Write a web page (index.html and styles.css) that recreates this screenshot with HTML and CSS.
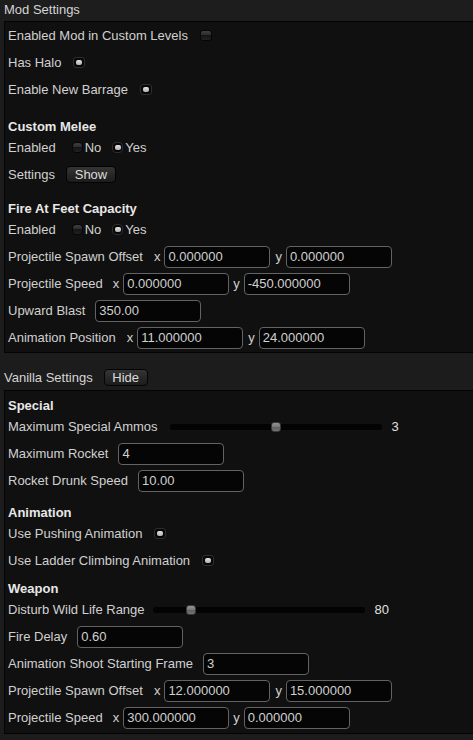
FILE: index.html
```html
<!DOCTYPE html>
<html>
<head>
<meta charset="utf-8">
<link rel="stylesheet" href="styles.css">
</head>
<body>
<div class="title">Mod Settings</div>
<div class="box box-mod">
  <div class="row"><span class="lbl">Enabled Mod in Custom Levels</span><i class="tog"></i></div>
  <div class="row"><span class="lbl">Has Halo</span><i class="tog on"></i></div>
  <div class="row"><span class="lbl">Enable New Barrage</span><i class="tog on"></i></div>

  <div class="head sp15">Custom Melee</div>
  <div class="row"><span class="lbl">Enabled</span><span class="opt first"><i class="radio"></i>No</span><span class="opt"><i class="radio on"></i>Yes</span></div>
  <div class="row"><span class="lbl">Settings</span><span class="btn btn-show">Show</span></div>

  <div class="head sp12">Fire At Feet Capacity</div>
  <div class="row"><span class="lbl">Enabled</span><span class="opt first"><i class="radio"></i>No</span><span class="opt"><i class="radio on"></i>Yes</span></div>
  <div class="row"><span class="lbl">Projectile Spawn Offset</span><span class="ax ax-x">x</span><span class="field">0.000000</span><span class="ax ax-y">y</span><span class="field">0.000000</span></div>
  <div class="row"><span class="lbl">Projectile Speed</span><span class="ax ax-x ax-tight">x</span><span class="field">0.000000</span><span class="ax ax-y ax-tight">y</span><span class="field">-450.000000</span></div>
  <div class="row"><span class="lbl">Upward Blast</span><span class="field solo">350.00</span></div>
  <div class="row"><span class="lbl">Animation Position</span><span class="ax ax-x">x</span><span class="field">11.000000</span><span class="ax ax-y">y</span><span class="field">24.000000</span></div>
</div>

<div class="subtitle"><span>Vanilla Settings</span><span class="btn btn-hide">Hide</span></div>
<div class="box box-van">
  <div class="head">Special</div>
  <div class="row"><span class="lbl">Maximum Special Ammos</span><span class="slider s12"><i class="thumb" style="left:101px"></i></span><span class="val">3</span></div>
  <div class="row"><span class="lbl">Maximum Rocket</span><span class="field solo">4</span></div>
  <div class="row"><span class="lbl">Rocket Drunk Speed</span><span class="field solo">10.00</span></div>

  <div class="head sp10">Animation</div>
  <div class="row"><span class="lbl">Use Pushing Animation</span><i class="tog on"></i></div>
  <div class="row"><span class="lbl">Use Ladder Climbing Animation</span><i class="tog on"></i></div>

  <div class="head sp6">Weapon</div>
  <div class="row"><span class="lbl">Disturb Wild Life Range</span><span class="slider s8"><i class="thumb" style="left:33px"></i></span><span class="val">80</span></div>
  <div class="row"><span class="lbl">Fire Delay</span><span class="field solo">0.60</span></div>
  <div class="row"><span class="lbl">Animation Shoot Starting Frame</span><span class="field solo">3</span></div>
  <div class="row"><span class="lbl">Projectile Spawn Offset</span><span class="ax ax-x">x</span><span class="field">12.000000</span><span class="ax ax-y">y</span><span class="field">15.000000</span></div>
  <div class="row"><span class="lbl">Projectile Speed</span><span class="ax ax-x ax-tight">x</span><span class="field">300.000000</span><span class="ax ax-y ax-tight">y</span><span class="field">0.000000</span></div>
</div>
</body>
</html>
```

FILE: styles.css
```css
html, body {
  margin: 0;
  padding: 0;
}
body {
  width: 473px;
  height: 740px;
  overflow: hidden;
  background: #1c1c1c;
  font-family: "Liberation Sans", Arial, sans-serif;
  font-size: 13px;
  color: #d0d0d0;
}
.title {
  height: 21px;
  line-height: 20px;
  padding-left: 4px;
  background: #1d1d1d;
  color: #d4d4d4;
}
.box {
  margin-left: 4px;
  background: #101010;
  border: 1px solid #040404;
  border-right: none;
  padding-left: 3px;
  display: flex;
  flex-direction: column;
}
.box-mod {
  padding-top: 0;
  padding-bottom: 1px;
}
.box-van {
  padding-top: 6px;
  padding-bottom: 2px;
}
.row {
  height: 27px;
  display: flex;
  align-items: center;
  white-space: nowrap;
}
.head {
  height: 16px;
  display: flex;
  align-items: center;
  font-weight: bold;
  color: #e8e8e8;
}
.sp15 { margin-top: 15px; }
.sp12 { margin-top: 12px; }
.sp10 { margin-top: 10px; }
.sp6 { margin-top: 6px; }

.subtitle {
  display: flex;
  align-items: center;
  padding: 16px 0 4px 4px;
  color: #d4d4d4;
  background: #1c1c1c;
}
.subtitle .btn { margin-left: 11px; }

/* toggle */
.tog {
  display: inline-block;
  position: relative;
  box-sizing: border-box;
  width: 12px;
  height: 11px;
  margin-left: 12px;
  border-radius: 3px;
  border: 1px solid #060606;
  background: linear-gradient(#404040, #2c2c2c 45%, #151515 50%, #222222);
}
.tog.on, .radio.on {
  background: #070707;
  border-color: #2e2e2e;
}
.tog.on::after, .radio.on::after {
  content: "";
  position: absolute;
  left: 2px;
  top: 2px;
  width: 6px;
  height: 5px;
  border-radius: 2px;
  background: linear-gradient(#e4e4e4, #b0b0b0);
}

/* radio */
.opt {
  display: inline-flex;
  align-items: center;
  margin-left: 11px;
}
.opt.first { margin-left: 16px; }
.radio {
  display: inline-block;
  position: relative;
  box-sizing: border-box;
  width: 11px;
  height: 11px;
  margin-right: 2px;
  border-radius: 4px;
  border: 1px solid #060606;
  background: linear-gradient(#404040, #2c2c2c 45%, #151515 50%, #222222);
}
.radio.on::after {
  left: 1.5px;
  top: 2px;
}

/* buttons */
.btn {
  display: inline-block;
  box-sizing: border-box;
  height: 17px;
  line-height: 15px;
  text-align: center;
  border: 1px solid #030303;
  border-radius: 4px;
  background: linear-gradient(#353535, #282828 50%, #1c1c1c);
  color: #dcdcdc;
}
.btn-show { width: 50px; margin-left: 11px; }
.btn-hide { width: 44px; }

/* fields */
.field {
  display: inline-block;
  box-sizing: border-box;
  width: 106px;
  height: 22px;
  line-height: 20px;
  padding-left: 3px;
  border: 1px solid #636363;
  border-radius: 4px;
  background: #050505;
  color: #d0d0d0;
}
.field.solo { margin-left: 10px; }
.ax { color: #d0d0d0; }
.ax-x { margin-left: 11px; margin-right: 4px; }
.ax-y { margin-left: 5px; margin-right: 4px; }
.ax-x.ax-tight { margin-left: 10px; margin-right: 4px; }
.ax-y.ax-tight { margin-left: 4px; margin-right: 4px; }

/* sliders */
.slider {
  position: relative;
  display: inline-block;
  width: 212px;
  height: 6px;
  border-radius: 3px;
  background: #030303;
}
.slider.s12 { margin-left: 12px; }
.slider.s8 { margin-left: 8px; }
.thumb {
  position: absolute;
  top: -2px;
  width: 10px;
  height: 10px;
  box-sizing: border-box;
  border-radius: 3px;
  border: 1px solid #3a3a3a;
  background: linear-gradient(#959595, #7a7a7a 45%, #5f5f5f 50%, #747474);
}
.val {
  margin-left: 10px;
  color: #e0e0e0;
}
```
